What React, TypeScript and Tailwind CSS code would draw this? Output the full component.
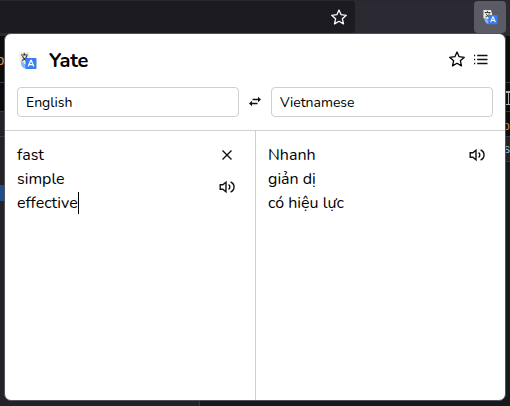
function TranslateLogo({ className }: { className: string }) {
  return (
    <svg viewBox="0 0 18 18" className={className}>
      <path d="M.5 0h9l1.5 5v6H2L.5 9z" fill="#eeecdf" />
      <path d="M2 3h7M5 1l.7 1.6M3.5 4.2c.8 2 2.2 3.4 4 4.2M7.700 3.800c-.5 2.200-2.200 3.800-4.900 4.700" fill="none" stroke="#333336" strokeWidth="1.1" />
      <path d="M2 9.500h2l1 2 2 1v4c-3.500 0-5.500-3-5-7z" fill="#84b5fa" />
      <path d="M6.500 6h10q1 0 1 1v9q0 1-1 1h-10z" fill="#367df5" />
      <path d="m9.200 14.500 2.500-6h.6l2.500 6M10 12.600h4" fill="none" stroke="#fff" strokeWidth="1.300" />
    </svg>
  );
}

function StarIcon({ className }: { className: string }) {
  return (
    <svg viewBox="0 0 18 18" className={className} fill="none" stroke="currentColor" strokeWidth="1.300" strokeLinejoin="round">
      <path d="m9 2 2.100 4.700 5.200.6-3.900 3.500 1.100 5.100L9 13.300l-4.500 2.600 1.100-5.100-3.900-3.500 5.200-.6z" />
    </svg>
  );
}

function ListIcon() {
  return (
    <svg viewBox="0 0 18 18" className="h-[18px] w-[18px]" fill="none" stroke="#111" strokeWidth="1.300">
      <path d="M5.200 3.500h10.300M5.200 7.500h10.300M5.200 11.500h10.300M2 3.500h1.200M2 7.500h1.200M2 11.500h1.200" />
    </svg>
  );
}

function CloseIcon() {
  return (
    <svg viewBox="0 0 18 18" className="h-[18px] w-[18px]" fill="none" stroke="#111" strokeWidth="1.400">
      <path d="m4.500 4.500 9 9M13.500 4.500l-9 9" />
    </svg>
  );
}

function SpeakerIcon() {
  return (
    <svg viewBox="0 0 18 18" className="h-[18px] w-[18px]" fill="none" stroke="#111" strokeWidth="1.400">
      <path d="M2.200 6.800h2.600l3.200-2.600v9.600l-3.200-2.600H2.200z" />
      <path d="M10.500 6.600c1.800 1.200 1.800 3.600 0 4.800M12.600 4c4.600 2 4.600 8 0 10" />
    </svg>
  );
}

function SwapIcon() {
  return (
    <svg viewBox="0 0 14 12" className="h-3 w-3.5" fill="none" stroke="#111" strokeWidth="1.400">
      <path d="M4.500 3.500H11M9.500 7.500H3" />
      <path d="m10 .8 3 2.700-3 2.700zM4 4.800 1 7.500l3 2.700z" fill="#111" stroke="none" />
    </svg>
  );
}

function LanguageField({ name }: { name: string }) {
  return (
    <button className="h-[30px] w-[222px] rounded border border-[#cfcfd3] bg-white pl-2 text-left text-sm leading-[30px]">
      {name}
    </button>
  );
}

export default function App() {
  return (
    <div className="relative flex h-[406px] w-[510px] flex-col overflow-hidden bg-[#18191a] font-['Nunito','Open_Sans',sans-serif] text-black">
      <div className="flex h-9 shrink-0 items-start justify-between border-t border-[#28272f] bg-[#2b2a33] pr-1">
        <div className="flex h-8 w-[355px] items-center justify-end rounded-r bg-[#1c1b22] pr-[7px] text-[#fbfbfe]">
          <StarIcon className="h-[18px] w-[18px]" />
        </div>
        <div className="flex h-8 w-8 items-center justify-center rounded bg-[#5b5b66]">
          <TranslateLogo className="h-[15px] w-[15px]" />
        </div>
      </div>
      <div className="flex grow justify-between">
        <div className="flex w-[200px] flex-col border-r border-[#38383d] bg-[#232327]">
          <div className="h-[46px] bg-[#0c0c0d] pt-3.5 font-['Liberation_Sans',sans-serif] text-[15px] leading-5 text-[#d68a43]">
            <span className="-ml-1">b</span>
          </div>
          <div className="h-[30px] border-y border-[#38383d] bg-[#0c0c0d]" />
          <div className="h-[25px] border-b border-[#38383d]" />
          <div className="mt-12 h-4 bg-[#204e8a]" />
        </div>
        <div className="flex w-1 flex-col bg-[#18191a]">
          <div className="h-[46px] bg-[#0c0c0d]" />
          <div className="h-[30px] border-y border-[#38383d] bg-[#0c0c0d] pt-2">
            <div className="flex h-3.5 flex-col justify-between border-y border-[#b1b1b3]">
              <div className="h-px bg-[#b1b1b3]" />
              <div className="h-full w-px self-center bg-[#b1b1b3]" />
            </div>
          </div>
          <div className="h-[25px] border-b border-[#38383d] bg-[#0c0c0d] pt-1.5 font-['Liberation_Sans',sans-serif] text-[12px] leading-4 text-[#d68a43]">
            <span className="-ml-[3px]">o</span>
          </div>
          <div className="h-[25px] border-b border-[#38383d] bg-[#232327] font-['Liberation_Sans',sans-serif] text-[12px] leading-6 text-[#86c9e8]">
            <span className="-ml-0.5">s</span>
          </div>
        </div>
      </div>

      <main className="absolute left-1 top-[33px] flex h-[368px] w-[502px] flex-col overflow-hidden rounded-[7px] border border-[#52525e] bg-white">
        <header className="flex h-[53px] shrink-0 items-center pl-3.5 pr-[15px]">
          <TranslateLogo className="h-[18px] w-[18px]" />
          <h1 className="ml-3 grow text-[20px] font-bold leading-7 tracking-[-0.25px]">Yate</h1>
          <StarIcon className="mb-[3px] mr-1.5 h-[18px] w-[18px]" />
          <ListIcon />
        </header>
        <div className="flex h-[44px] shrink-0 items-start justify-between border-b border-[#cfcfd3] px-3">
          <LanguageField name="English" />
          <div className="flex h-[30px] items-center">
            <SwapIcon />
          </div>
          <LanguageField name="Vietnamese" />
        </div>
        <div className="flex grow text-base leading-6">
          <section className="flex w-[251px] justify-between border-r border-[#cfcfd3] pl-3 pr-[19px] pt-3">
            <div>
              <p>fast</p>
              <p>simple</p>
              <p className="flex items-center">effective<span className="h-[22px] w-px bg-black" /></p>
            </div>
            <div className="flex flex-col items-center gap-3.5 pt-[3px]">
              <CloseIcon />
              <SpeakerIcon />
            </div>
          </section>
          <section className="flex grow justify-between pl-3 pr-[19px] pt-3">
            <div>
              <p>Nhanh</p>
              <p>giản dị</p>
              <p>có hiệu lực</p>
            </div>
            <div className="pt-[3px]">
              <SpeakerIcon />
            </div>
          </section>
        </div>
      </main>
    </div>
  );
}
